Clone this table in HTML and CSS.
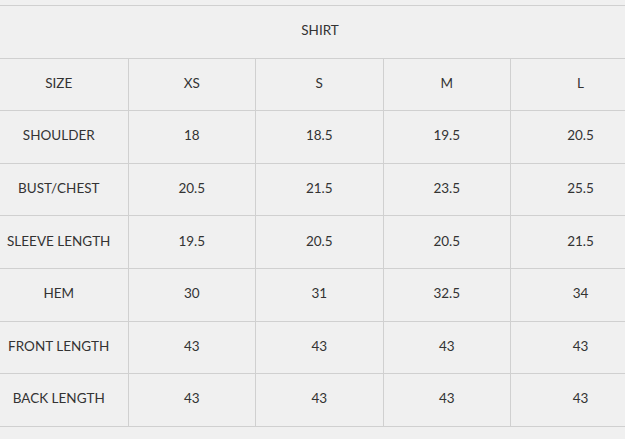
FILE: index.html
```html
<!DOCTYPE html>
<html lang="en">
<head>
<meta charset="utf-8">
<title>Size chart</title>
<link rel="stylesheet" href="styles.css">
</head>
<body>
<div class="chart">
<table class="size-table">
  <colgroup>
    <col class="col-label">
    <col class="col-size">
    <col class="col-size">
    <col class="col-size">
    <col class="col-last">
  </colgroup>
  <thead>
    <tr><th colspan="5" class="title">SHIRT</th></tr>
  </thead>
  <tbody>
    <tr><td>SIZE</td><td>XS</td><td>S</td><td>M</td><td>L</td></tr>
    <tr><td>SHOULDER</td><td>18</td><td>18.5</td><td>19.5</td><td>20.5</td></tr>
    <tr><td>BUST/CHEST</td><td>20.5</td><td>21.5</td><td>23.5</td><td>25.5</td></tr>
    <tr><td>SLEEVE LENGTH</td><td>19.5</td><td>20.5</td><td>20.5</td><td>21.5</td></tr>
    <tr><td>HEM</td><td>30</td><td>31</td><td>32.5</td><td>34</td></tr>
    <tr><td>FRONT LENGTH</td><td>43</td><td>43</td><td>43</td><td>43</td></tr>
    <tr><td>BACK LENGTH</td><td>43</td><td>43</td><td>43</td><td>43</td></tr>
  </tbody>
</table>
</div>
</body>
</html>
```

FILE: styles.css
```css
html, body {
  margin: 0;
  padding: 0;
  background: #f0f0f0;
  overflow: hidden;
}
.chart {
  padding-top: 5px;
  margin-left: -10px;
  width: 660px;
}
.size-table {
  width: 660px;
  table-layout: fixed;
  border-collapse: collapse;
  font-family: "Lato", "Open Sans", sans-serif;
  font-size: 13.5px;
  color: #333;
}
.col-label { width: 138px; }
.col-size { width: 127.5px; }
.col-last { width: 139.5px; }
.size-table tr {
  height: 52.6px;
}
.size-table th,
.size-table td {
  border: 1px solid #d0d0d0;
  text-align: center;
  vertical-align: middle;
  padding: 0 0 3px 0;
  font-weight: 400;
}
.size-table .title {
  border-left: none;
  border-right: none;
  padding-bottom: 4px;
}
.size-table td:first-child { border-left: none; }
.size-table td:last-child { border-right: none; }
```
